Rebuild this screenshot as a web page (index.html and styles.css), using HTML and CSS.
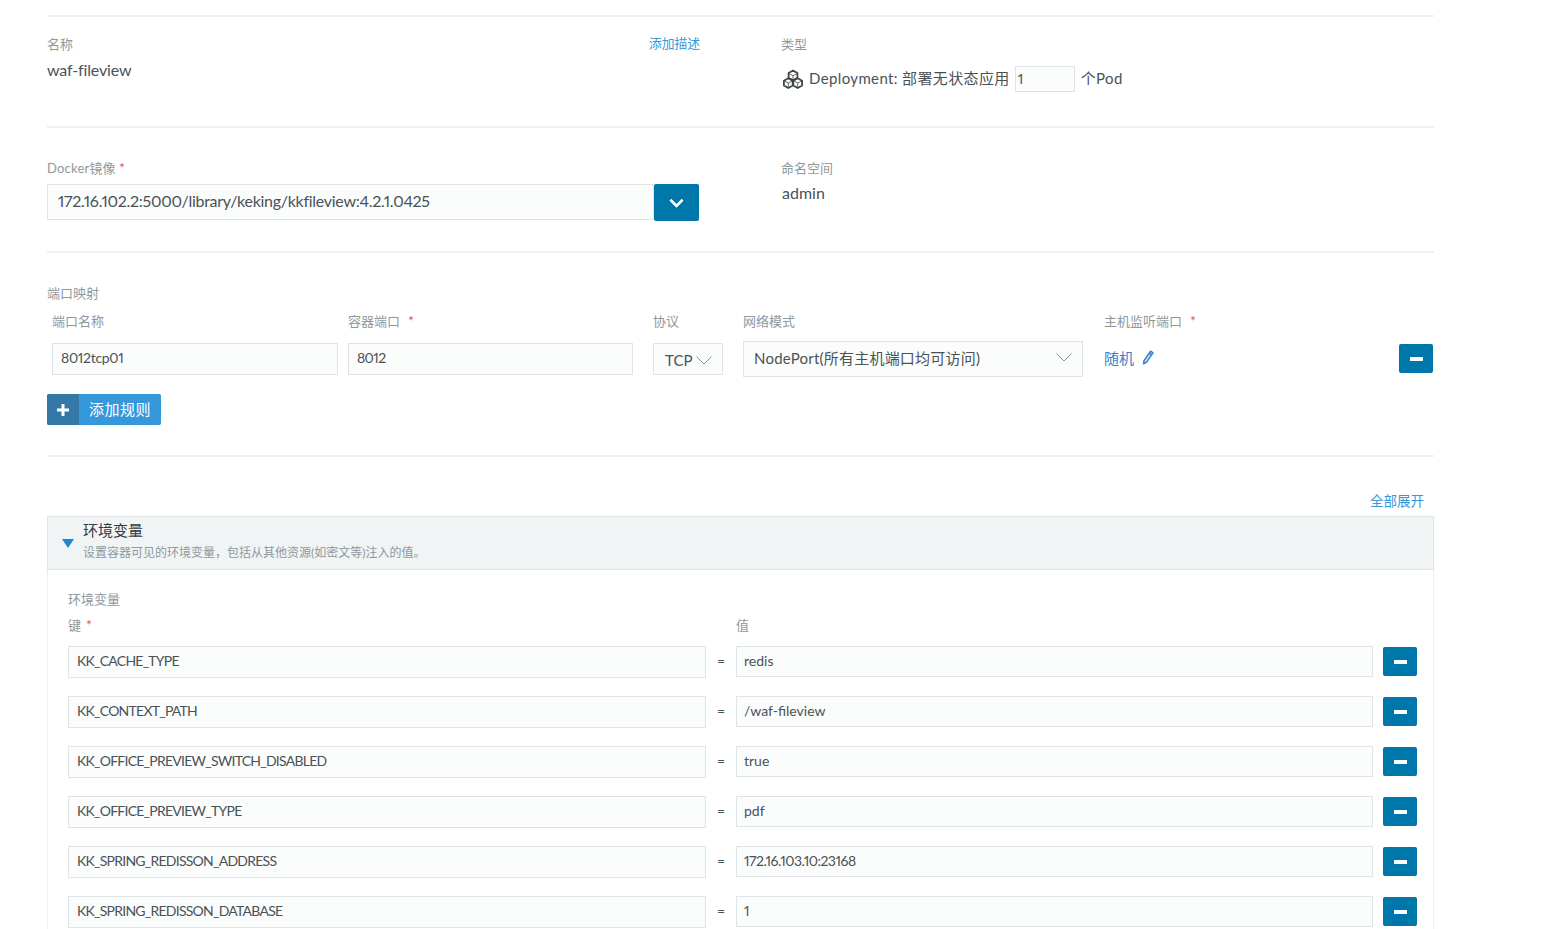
FILE: index.html
```html
<!DOCTYPE html>
<html lang="zh-CN">
<head>
    <meta charset="UTF-8">
    <title>waf-fileview</title>
    <link rel="stylesheet" href="styles.css">
</head>
<body>
    <div class="page">
        <div class="section section-name">
            <div class="col-left">
                <div class="label-row">
                    <span class="label">名称</span>
                    <a class="link link-desc">添加描述</a>
                </div>
                <div class="value value-name">waf-fileview</div>
            </div>
            <div class="col-right">
                <div class="label">类型</div>
                <div class="type-row">
                    <svg class="deploy-icon" viewBox="0 0 22 22" width="22" height="22" fill="none" stroke="#3f4549" stroke-width="1.8" stroke-linejoin="round">
                        <path d="M11 1.5l4.4 2.5v4.8L11 11.3 6.6 8.8V4z"/>
                        <path d="M6.3 9.2l4.4 2.5v4.8l-4.4 2.5-4.4-2.5v-4.8z"/>
                        <path d="M15.7 9.2l4.4 2.5v4.8l-4.4 2.5-4.4-2.5v-4.8z"/>
                        <path stroke-width="0.8" d="M6.8 4.5L11 6.8l4.2-2.3M11 6.8v4.4M2.1 11.8l4.2 2.2 4.2-2.2M6.3 14v4.5M11.5 11.8l4.2 2.2 4.2-2.2M15.7 14v4.5"/>
                    </svg>
                    <span class="type-text">Deployment: 部署无状态应用</span>
                    <div class="input input-scale">1</div>
                    <span class="type-text">个Pod</span>
                </div>
            </div>
        </div>

        <div class="section section-image">
            <div class="col-left">
                <div class="label label-docker">Docker镜像 <span class="req">*</span></div>
                <div class="image-row">
                    <div class="input input-image">172.16.102.2:5000/library/keking/kkfileview:4.2.1.0425</div>
                    <button class="btn-blue btn-drop">
                        <svg viewBox="0 0 16 10" width="15" height="10" fill="none" stroke="#fff" stroke-width="2.8"><path d="M1.5 1.5L8 8l6.5-6.5"/></svg>
                    </button>
                </div>
            </div>
            <div class="col-right">
                <div class="label">命名空间</div>
                <div class="value value-ns">admin</div>
            </div>
        </div>

        <div class="section section-ports">
            <div class="label">端口映射</div>
            <div class="port-grid">
                <div class="label">端口名称</div>
                <div class="label">容器端口 <span class="req req-gap">*</span></div>
                <div class="label">协议</div>
                <div class="label">网络模式</div>
                <div class="label">主机监听端口 <span class="req req-gap">*</span></div>
                <div></div>

                <div class="input input-port input-portname">8012tcp01</div>
                <div class="input input-port input-container">8012</div>
                <div class="input input-port select select-tcp">TCP
                    <svg viewBox="0 0 16 9" width="16" height="9" fill="none" stroke="#8b9397" stroke-width="1"><path d="M.5.5L8 8l7.5-7.5"/></svg>
                </div>
                <div class="input select select-mode">NodePort(所有主机端口均可访问)
                    <svg viewBox="0 0 16 9" width="16" height="9" fill="none" stroke="#8b9397" stroke-width="1"><path d="M.5.5L8 8l7.5-7.5"/></svg>
                </div>
                <div class="random">
                    <a class="link link-random">随机</a>
                    <svg viewBox="0 0 12 15" width="12" height="15" fill="#cfe0f2" stroke="#3d7fc4" stroke-width="1.5" stroke-linejoin="round"><path d="M8.6 1.2l2.4 1.6-6.4 9.4-3 1.6.4-3.2z"/><path d="M7.2 3.2l2.4 1.6"/></svg>
                </div>
                <button class="btn-blue btn-minus btn-port"><span class="minus"></span></button>
            </div>
            <button class="btn-add">
                <span class="btn-add-icon">
                    <svg viewBox="0 0 12 12" width="12" height="12" fill="#fff"><path d="M4.5 0h3v4.5H12v3H7.5V12h-3V7.5H0v-3h4.5z"/></svg>
                </span>
                <span class="btn-add-text">添加规则</span>
            </button>
        </div>

        <div class="expand-row"><a class="link link-expand">全部展开</a></div>

        <div class="panel">
            <div class="panel-head">
                <span class="triangle"></span>
                <div class="panel-text">
                    <div class="panel-title">环境变量</div>
                    <div class="panel-sub">设置容器可见的环境变量，包括从其他资源(如密文等)注入的值。</div>
                </div>
            </div>
            <div class="panel-body">
                <div class="label env-label">环境变量</div>
                <div class="env-head">
                    <div class="label">键 <span class="req req-key">*</span></div>
                    <div></div>
                    <div class="label">值</div>
                </div>
                <div class="env-row">
                    <div class="input input-key">KK_CACHE_TYPE</div><span class="eq">=</span><div class="input input-val">redis</div>
                    <button class="btn-blue btn-minus"><span class="minus"></span></button>
                </div>
                <div class="env-row">
                    <div class="input input-key">KK_CONTEXT_PATH</div><span class="eq">=</span><div class="input input-val">/waf-fileview</div>
                    <button class="btn-blue btn-minus"><span class="minus"></span></button>
                </div>
                <div class="env-row">
                    <div class="input input-key">KK_OFFICE_PREVIEW_SWITCH_DISABLED</div><span class="eq">=</span><div class="input input-val">true</div>
                    <button class="btn-blue btn-minus"><span class="minus"></span></button>
                </div>
                <div class="env-row">
                    <div class="input input-key">KK_OFFICE_PREVIEW_TYPE</div><span class="eq">=</span><div class="input input-val">pdf</div>
                    <button class="btn-blue btn-minus"><span class="minus"></span></button>
                </div>
                <div class="env-row">
                    <div class="input input-key">KK_SPRING_REDISSON_ADDRESS</div><span class="eq">=</span><div class="input input-val input-num">172.16.103.10:23168</div>
                    <button class="btn-blue btn-minus"><span class="minus"></span></button>
                </div>
                <div class="env-row">
                    <div class="input input-key">KK_SPRING_REDISSON_DATABASE</div><span class="eq">=</span><div class="input input-val">1</div>
                    <button class="btn-blue btn-minus"><span class="minus"></span></button>
                </div>
            </div>
        </div>
    </div>
</body>
</html>
```

FILE: styles.css
```css
* {
    margin: 0;
    padding: 0;
    box-sizing: border-box;
}

html, body {
    height: 929px;
    overflow: hidden;
    background: #fff;
}

body {
    font-family: Lato, 'Noto Sans CJK SC', sans-serif;
    font-variant-numeric: proportional-nums;
    color: #4a5256;
}

.page {
    width: 1387px;
    height: 929px;
    margin-left: 47px;
    padding-top: 15px;
    overflow: hidden;
}

.section {
    border-top: 2px solid #eef1f2;
}

.section-name {
    display: flex;
    height: 111px;
    padding-top: 17px;
}

.section-image {
    display: flex;
    height: 125px;
    padding-top: 30px;
}

.section-ports {
    height: 206px;
    padding-top: 30px;
    border-bottom: 2px solid #eef1f2;
}

.col-left {
    width: 652px;
    margin-right: 82px;
}

.label {
    font-size: 13px;
    line-height: 20px;
    color: #8f989c;
}

.label-docker {
    letter-spacing: 0.2px;
}

.label-row {
    display: flex;
    justify-content: space-between;
}

.link {
    font-size: 13px;
    line-height: 20px;
    color: #3498db;
}

.link-desc {
    font-size: 12.75px;
    margin-right: -1px;
    margin-top: -1px;
}

.link-expand {
    font-size: 13.5px;
}

.req {
    color: #e5484d;
}

.req-gap {
    margin-left: 5px;
}

.req-key {
    margin-left: 2px;
}

.value {
    font-size: 16px;
    line-height: 20px;
    color: #4a5256;
}

.value-name {
    margin-top: 6px;
    letter-spacing: -0.15px;
}

.value-ns {
    margin-top: 5px;
    margin-left: 1px;
}

.type-row {
    display: flex;
    align-items: center;
    margin-top: 11px;
}

.deploy-icon {
    margin-right: 5px;
    margin-top: 2px;
    margin-left: 1px;
}

.type-text {
    font-size: 15px;
    line-height: 26px;
    padding-bottom: 2px;
    letter-spacing: 0.37px;
    color: #4a5256;
}

.input {
    display: flex;
    align-items: center;
    background: #fbfcfc;
    border: 1px solid #dfe5e7;
    color: #4a5256;
    white-space: nowrap;
}

.input-scale {
    width: 60px;
    height: 26px;
    margin: 0 6px 0 5px;
    padding-left: 2px;
    padding-bottom: 1px;
    font-size: 14px;
}

.image-row {
    display: flex;
    align-items: flex-start;
    margin-top: 6px;
}

.input-image {
    width: 607px;
    height: 36px;
    padding-left: 10px;
    padding-bottom: 3px;
    font-size: 16px;
    letter-spacing: -0.28px;
}

.btn-blue {
    display: flex;
    align-items: center;
    justify-content: center;
    background: #0077aa;
    border: none;
    border-radius: 2px;
}

.btn-drop {
    width: 45px;
    height: 37px;
}

.port-grid {
    display: grid;
    grid-template-columns: 296px 305px 90px 361px 1fr 34px;
    align-items: center;
    margin: 8px 1px 0 5px;
}

.port-grid > .label {
    margin-bottom: 10px;
}

.input-port {
    height: 32px;
    padding-left: 8px;
    padding-bottom: 3px;
    font-size: 14px;
}

.input-portname {
    margin-right: 10px;
    letter-spacing: -0.3px;
}

.input-container {
    margin-right: 20px;
    letter-spacing: -0.6px;
}

.select {
    justify-content: space-between;
}

.select svg {
    flex: none;
}

.select-tcp {
    margin-right: 20px;
    padding: 2px 10px 0 11px;
    font-size: 15px;
}

.select-mode {
    height: 36px;
    margin-right: 21px;
    padding: 0 10px 3px 10px;
    font-size: 15px;
    letter-spacing: 0.22px;
}

.random {
    display: flex;
    align-items: center;
    gap: 8px;
    padding-bottom: 3px;
}

.link-random {
    font-size: 15px;
    color: #3d7fc4;
}

.btn-minus {
    width: 34px;
    height: 29px;
}

.btn-port {
    align-self: start;
    margin-top: 3px;
}

.minus {
    width: 13px;
    height: 4px;
    background: #fff;
}

.btn-add {
    display: flex;
    align-items: stretch;
    width: 114px;
    height: 31px;
    margin-top: 17px;
    background: #3498db;
    border: none;
    border-radius: 2px;
    overflow: hidden;
    font-family: inherit;
}

.btn-add-icon {
    display: flex;
    align-items: center;
    justify-content: center;
    width: 32px;
    background: #3478a8;
}

.btn-add-text {
    padding-left: 10px;
    font-size: 15px;
    line-height: 31px;
    letter-spacing: 0.5px;
    color: #fff;
}

.expand-row {
    display: flex;
    justify-content: flex-end;
    height: 59px;
    padding-top: 34px;
    padding-right: 10px;
}

.panel {
    border: 1px solid #eef1f2;
    border-top: none;
}

.panel-head {
    display: flex;
    align-items: center;
    gap: 9px;
    height: 54px;
    margin: 0 -1px;
    padding-left: 14px;
    background: #f0f4f5;
    border: 1px solid #dfe5e7;
}

.panel-text {
    padding-bottom: 4px;
}

.triangle {
    width: 0;
    height: 0;
    border-left: 6px solid transparent;
    border-right: 6px solid transparent;
    border-top: 9px solid #1f86cf;
    margin-top: 1px;
}

.panel-title {
    font-size: 15px;
    line-height: 18px;
    margin-bottom: 5px;
    color: #333a3e;
}

.panel-sub {
    font-size: 12px;
    line-height: 18px;
    color: #8f989c;
}

.panel-body {
    padding: 19px 16px 0 20px;
}

.env-head {
    display: grid;
    grid-template-columns: 638px 30px 1fr;
    margin-top: 6px;
    margin-bottom: 11px;
}

.env-row {
    display: grid;
    grid-template-columns: 638px 30px 637px 34px;
    align-items: center;
    height: 32px;
    margin-bottom: 18px;
}

.input-key {
    height: 32px;
    padding-left: 8px;
    padding-bottom: 3px;
    font-size: 14px;
    letter-spacing: -0.75px;
}

.input-val {
    height: 31px;
    padding-left: 7px;
    padding-bottom: 2px;
    font-size: 14px;
    align-self: start;
}

.input-num {
    letter-spacing: -0.5px;
}

.eq {
    padding-bottom: 3px;
    font-size: 14px;
    text-align: center;
    color: #4a5256;
}

.env-row .btn-minus {
    align-self: start;
    margin-top: 1px;
    margin-left: 10px;
}
```
